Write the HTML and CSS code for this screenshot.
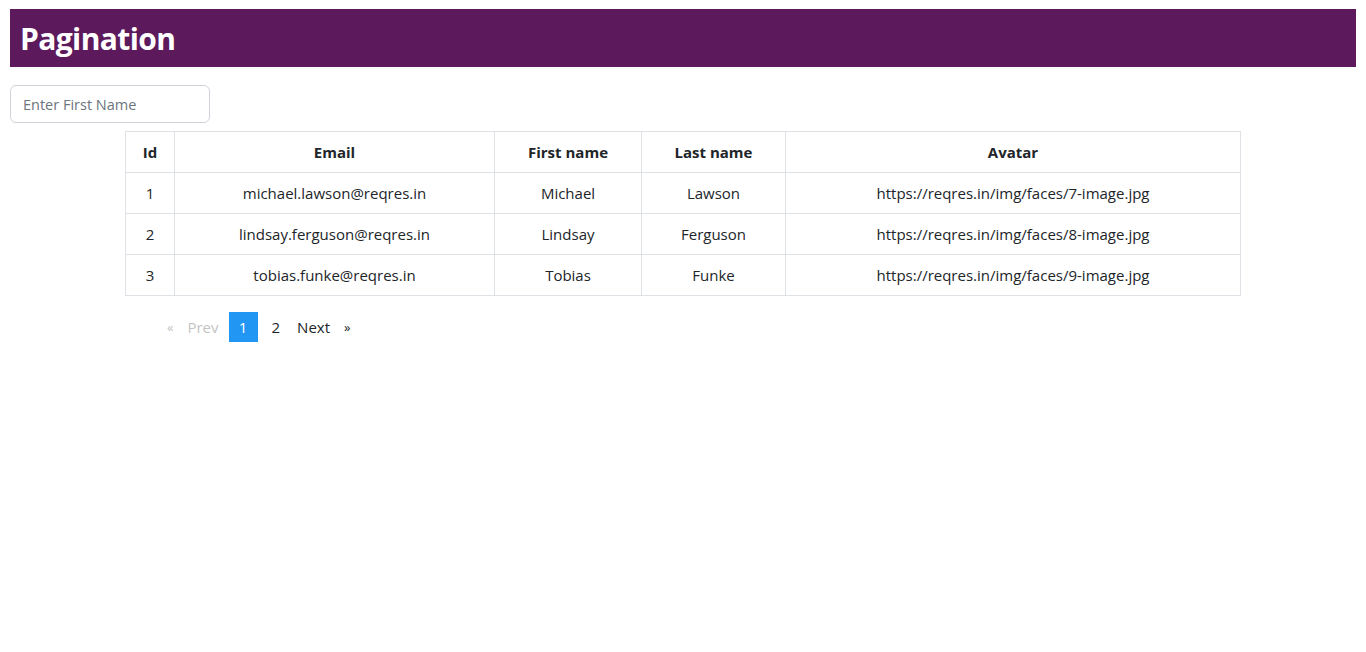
FILE: index.html
```html
<!DOCTYPE html>
<html>
<head>
<meta charset="utf-8">
<link rel="stylesheet" href="styles.css">
</head>
<body>
<div class="app">
  <header class="topbar"><h1 class="title">Pagination</h1></header>
  <div class="search"><input class="search-input" type="text" placeholder="Enter First Name"></div>
  <table class="users">
    <colgroup>
      <col style="width:49px"><col style="width:320px"><col style="width:147px"><col style="width:144px"><col>
    </colgroup>
    <thead>
      <tr><th>Id</th><th>Email</th><th>First name</th><th>Last name</th><th>Avatar</th></tr>
    </thead>
    <tbody>
      <tr><td>1</td><td>michael.lawson@reqres.in</td><td>Michael</td><td>Lawson</td><td>https://reqres.in/img/faces/7-image.jpg</td></tr>
      <tr><td>2</td><td>lindsay.ferguson@reqres.in</td><td>Lindsay</td><td>Ferguson</td><td>https://reqres.in/img/faces/8-image.jpg</td></tr>
      <tr><td>3</td><td>tobias.funke@reqres.in</td><td>Tobias</td><td>Funke</td><td>https://reqres.in/img/faces/9-image.jpg</td></tr>
    </tbody>
  </table>
  <ul class="pager">
    <li class="pager-item disabled arrow">«</li>
    <li class="pager-item disabled">Prev</li>
    <li class="pager-item active">1</li>
    <li class="pager-item page">2</li>
    <li class="pager-item">Next</li>
    <li class="pager-item arrow">»</li>
  </ul>
</div>
</body>
</html>
```
FILE: styles.css
```css
html, body {
  margin: 0;
  padding: 0;
  background: #fff;
}
body {
  font-family: "Open Sans", "Noto Sans", sans-serif;
  color: #212529;
}
.app {
  padding: 9px 10px;
}
.topbar {
  background: #5c1a5c;
  height: 58px;
  display: flex;
  align-items: center;
  padding: 0 10px;
}
.title {
  margin: 0;
  color: #fff;
  font-size: 30px;
  font-weight: 700;
  letter-spacing: -0.6px;
}
.search {
  margin-top: 18px;
}
.search-input {
  box-sizing: border-box;
  width: 200px;
  height: 38px;
  border: 1px solid #ced4da;
  border-radius: 6px;
  padding: 0 12px;
  font-family: inherit;
  font-size: 14.5px;
  color: #495057;
  outline: none;
}
.search-input::placeholder {
  color: #6c757d;
}
.users {
  margin: 8px auto 0;
  width: 1116px;
  border-collapse: collapse;
  table-layout: fixed;
  font-size: 15px;
}
.users th, .users td {
  border: 1px solid #dee2e6;
  height: 41px;
  padding: 0 8px;
  text-align: center;
  vertical-align: middle;
  box-sizing: border-box;
}
.users th {
  font-weight: 700;
}
.pager {
  list-style: none;
  display: flex;
  align-items: center;
  margin: 16px 0 0 153px;
  padding: 0;
  font-size: 15px;
}
.pager-item {
  height: 30px;
  line-height: 30px;
  padding: 0 10px;
  color: #212529;
}
.pager-item.page {
  padding: 0 7px 0 14px;
}
.pager-item.arrow {
  font-size: 13px;
  padding: 0 4px;
}
.pager-item.disabled {
  color: #c4c4c4;
}
.pager-item.active {
  background: #2196f3;
  color: #fff;
  width: 29px;
  padding: 0;
  text-align: center;
  box-sizing: border-box;
}
```
